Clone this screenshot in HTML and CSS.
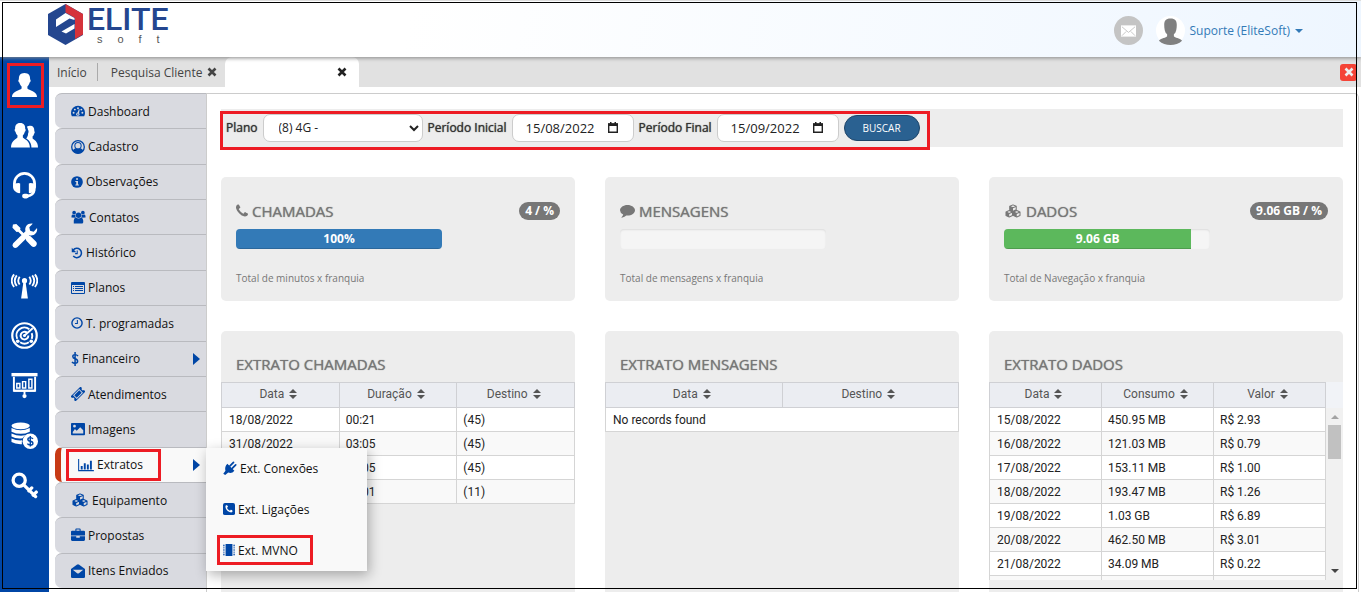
FILE: index.html
```html
<!DOCTYPE html>
<html lang="pt-BR">
<head>
<meta charset="utf-8">
<title>Elite Soft</title>
<link rel="stylesheet" href="styles.css">
</head>
<body>
<svg class="sprite" aria-hidden="true">
  <symbol id="i-x" viewBox="0 0 10 10"><path d="M1.5 1.5l7 7M8.5 1.5l-7 7" stroke="currentColor" stroke-width="2.6"/></symbol>
  <symbol id="i-gauge" viewBox="0 0 16 16"><path d="M8 2a8 8 0 0 0-8 8q0 2 1 4h14q1-2 1-4a8 8 0 0 0-8-8z"/><g fill="#d9dae0"><circle cx="3" cy="10" r="1.1"/><circle cx="4.4" cy="6.4" r="1.1"/><circle cx="8" cy="4.8" r="1.1"/><circle cx="13" cy="10" r="1.1"/><circle cx="11.8" cy="6.4" r="1.1"/><circle cx="7.8" cy="11.6" r="1.9"/><path d="M7 11L9 6l1 .4-1 5z"/></g><circle cx="7.8" cy="11.6" r=".8"/></symbol>
  <symbol id="i-user" viewBox="0 0 16 16"><circle cx="8" cy="8" r="7.200" fill="none" stroke="currentColor" stroke-width="1.500"/><path d="M2 12.500q.7-2.500 3-3.200 3 2 6 0 2.300.7 3 3.200Q11.500 15.500 8 15.500t-6-3z"/><circle cx="8" cy="6.500" r="3.600" fill="none" stroke="currentColor" stroke-width="1.200"/></symbol>
  <symbol id="i-info" viewBox="0 0 16 16"><circle cx="8" cy="8" r="7.800"/><path fill="#d9dae0" d="M6.800 3h2.500v2H6.800zM5.800 6.500h3.500v4.700h1.200v1.600H5.800v-1.600H7V8H5.800z"/></symbol>
  <symbol id="i-users" viewBox="0 0 16 16"><circle cx="3" cy="3" r="2.100"/><circle cx="13" cy="3" r="2.100"/><path d="M0 8.500V7q0-2 1.500-2 1.500 1 3 .5Q4 7 5 8.800zM16 8.500V7q0-2-1.500-2-1.500 1-3 .5.5 1.500-.5 3.300z"/><circle cx="8" cy="6" r="3.100"/><path d="M2.600 15.500V12Q2.800 9 5 8.600q3 2 6 0 2.200.4 2.400 3.400v2q0 1.500-1.500 1.500z"/></symbol>
  <symbol id="i-history" viewBox="0 0 16 16"><path d="M3 4a6.200 6.200 0 1 1 0 8" fill="none" stroke="currentColor" stroke-width="2"/><path d="M1 1v6h6z"/><path d="M8.300 4.500v4.300H5.500" fill="none" stroke="currentColor" stroke-width="1.400"/></symbol>
  <symbol id="i-list" viewBox="0 0 14 14"><path fill-rule="evenodd" d="M1 1h12q1 0 1 1v10q0 1-1 1H1q-1 0-1-1V2q0-1 1-1zM1 4v8h12V4z"/><path d="M2 5h1v1H2zm2 0h8v1H4zM2 7h1v1H2zm2 0h8v1H4zM2 9h1v1H2zm2 0h8v1H4z"/></symbol>
  <symbol id="i-clock" viewBox="0 0 16 16"><circle cx="8" cy="8" r="6.800" fill="none" stroke="currentColor" stroke-width="1.900"/><path d="M8.500 4v4.700H5.300" fill="none" stroke="currentColor" stroke-width="1.400"/></symbol>
  <symbol id="i-dollar" viewBox="0 0 9 16"><path d="M8 4.500Q6.500 3 4.700 3 2 3 2 5t2.700 2.700Q7.500 8.500 7.500 10.700 7.500 13 4.500 13 2.500 13 1 11.500M4.600 0v16" fill="none" stroke="currentColor" stroke-width="1.700"/></symbol>
  <symbol id="i-ticket" viewBox="0 0 16 16"><g transform="rotate(-45 8 8)"><path fill-rule="evenodd" d="M0 4h16v2.500a1.500 1.500 0 0 0 0 3V12H0V9.500a1.500 1.500 0 0 0 0-3zM3 5v6h10V5z"/><path d="M4 6h8v4H4z"/></g></symbol>
  <symbol id="i-image" viewBox="0 0 16 16"><path fill-rule="evenodd" d="M1 1h14q1 0 1 1v12q0 1-1 1H1q-1 0-1-1V2q0-1 1-1zM2 11.500V13h12V9.500L10.500 6l-4 4-2-2zM4 3.200a1.600 1.600 0 1 0 0 3.200 1.600 1.600 0 0 0 0-3.200z"/></symbol>
  <symbol id="i-chart" viewBox="0 0 18 16"><path d="M0 1h1.200v12.800H18V15H0zM3 9h2.200v4H3zm3.500-3h2.200v7H6.500zM10 7.500h2.200V13H10zM13.500 3h2.200v10h-2.200z"/></symbol>
  <symbol id="i-cubes" viewBox="0 0 18 16"><g fill="none" stroke="currentColor" stroke-width="1.200" stroke-linejoin="round"><path d="M9 1l3.700 1.600v4L9 8.300 5.300 6.600v-4zM5.300 2.700L9 4.300l3.700-1.600M4.700 7.500l3.700 1.600v4l-3.700 1.700L1 13.100v-4zM1 9.200l3.700 1.600 3.700-1.600M13.300 7.500L17 9.100v4l-3.700 1.700-3.700-1.700v-4zM9.600 9.200l3.700 1.600L17 9.200"/></g><path d="M5.300 2.700L9 4.300v4L5.300 6.700zM1 9.200l3.700 1.600v4L1 13.200zM9.600 9.200l3.700 1.600v4l-3.700-1.600z"/></symbol>
  <symbol id="i-case" viewBox="0 0 16 16"><path fill-rule="evenodd" d="M5 3V1.500Q5 .5 6 .5h4q1 0 1 1V3h3.700Q16 3 16 4.300V8.500H0V4.300Q0 3 1.300 3zm1.200-1.300V3h3.600V1.700zM0 9.500h6V11h4V9.500h6v4q0 1.300-1.300 1.300H1.300Q0 14.800 0 13.500z"/></symbol>
  <symbol id="i-mail" viewBox="0 0 16 16"><path d="M0 5.800L6.700.8q1.300-.9 2.600 0L16 5.800v8.700q0 1.500-1.500 1.500h-13Q0 16 0 14.500z"/><path d="M2 6.500h12l-5 4q-1 .8-2 0z" fill="#d9dae0"/></symbol>
  <symbol id="i-plug" viewBox="0 0 16 16"><path d="M5 3l8 8q-3 4-7 2.200L2.500 16 .3 14.500l2.500-3.400Q1.500 6.500 5 3z"/><path d="M8 5.500L12 1.500M10.500 8.500l4-4" stroke="currentColor" stroke-width="2" stroke-linecap="round"/></symbol>
  <symbol id="i-phonesq" viewBox="0 0 16 16"><rect x="0" y="0" width="16" height="16" rx="2.500"/><use href="#i-phone" x="3" y="3" width="10" height="10" color="#fff" fill="#fff"/></symbol>
  <symbol id="i-phone" viewBox="192 256 1408 1280"><path d="M1600 1240q0 27-10 70.500t-21 68.500q-21 50-122 106-94 51-186 51-27 0-53-3.500t-57.500-12.500-47-14.500-55.500-20.500-49-18q-98-35-175-83-127-79-264-216t-216-264q-48-77-83-175-3-9-18-49t-20.500-55.500-14.500-47-12.500-57.500-3.500-53q0-92 51-186 56-101 106-122 25-11 68.500-21t70.500-10q14 0 21 3 18 6 53 76 11 19 30 54t35 63.500 31 53.500q3 4 17.500 25t21.500 35.500 7 28.500q0 20-28.500 50t-62 55-62 53-28.500 46q0 9 5 22.500t8.500 20.500 14 24 11.500 19q76 137 174 235t235 174q2 1 19 11.500t24 14 20.500 8.500 22.500 5q18 0 46-28.500t53-62 55-62 50-28.500q14 0 28.500 7t35.500 21.500 25 17.500q25 15 53.500 31t63.500 35 54 30q70 35 76 53 3 7 3 21z"/></symbol>
  <symbol id="i-chip" viewBox="0 0 14 16"><path d="M3 1h8v14H3zM0 2h2v1H0zm0 2.200h2v1H0zm0 2.200h2v1H0zm0 2.200h2v1H0zm0 2.200h2v1H0zM0 13h2v1H0zM12 2h2v1h-2zm0 2.200h2v1h-2zm0 2.200h2v1h-2zm0 2.200h2v1h-2zm0 2.200h2v1h-2zm0 2.200h2v1h-2z"/></symbol>
  <symbol id="i-comment" viewBox="0 0 16 14"><path d="M8 .5c4.400 0 8 2.600 8 5.700s-3.600 5.700-8 5.700l-1.300-.1Q4.900 13.400 2.600 14q-1 .2-1-.1-.1-.2.500-.8Q3 12.200 3.400 10.700 0 9 0 6.200C0 3.100 3.600.5 8 .5z"/></symbol>
  <symbol id="i-sort" viewBox="0 0 8 10"><path d="M0 4l4-4 4 4zM0 6h8l-4 4z"/></symbol>

  <symbol id="n-user" viewBox="0 0 28 28"><path d="M14 1c4.500 0 6 3 5.800 6.500 1 .8.600 3-.5 3.500-.4 2-1.300 3.200-2.300 4v2c1.500 2 10 2.500 10 9H1c0-6.500 8.500-7 10-9v-2c-1-.8-1.900-2-2.300-4-1.100-.5-1.500-2.700-.5-3.500C8 4 9.500 1 14 1z"/></symbol>
  <symbol id="n-users" viewBox="0 0 28 28"><path d="M9.500 1c4 0 5.400 2.600 5.200 6 .9.700.6 2.700-.4 3.200-.4 1.800-1.200 3-2 3.600v2.200c1.200 1.700 7 2.500 7.300 10.500H0c0-7.500 5.700-8.800 6.700-10.500v-2.200c-.8-.6-1.600-1.800-2-3.600-1-.5-1.300-2.500-.4-3.200C4.100 3.600 5.500 1 9.500 1z"/><path d="M16.500 5c1-.8 2.500-1 3.500-1 3 0 4.300 2 4.200 5.500.7.600.5 2.200-.3 2.600-.3 1.400-.8 2.300-1.500 2.800v2.200c1.200 1.400 5.600 2.500 5.600 9.400h-6.800c-.2-5.500-3-7.700-5.500-9.300.8-1 2.100-2.500 2-5.200.8-1.500.6-3-.1-4 0-1-.6-2-1.100-3z"/></symbol>
  <symbol id="n-head" viewBox="0 0 28 28"><path d="M3.500 15V12a10.500 10.500 0 0 1 21 0v3M24.300 18c-.6 4-3 6.500-7.300 7" fill="none" stroke="#fff" stroke-width="2.800"/><path d="M4 12q5-1 5.500 0v9.500Q9 22.500 6 21.300 2 19 2 15zM24 12q-5-1-5.500 0v9.500q.5 1 3.500-.2 4-2.300 4-6.300z"/><rect x="11.500" y="22.500" width="7" height="5" rx="2.500"/></symbol>
  <symbol id="n-tools" viewBox="0 0 28 28"><path d="M2 2.500L5.500 2l4.300 4.300-.3 1.700 4.500 4.500-2 2-4.500-4.500-1.700.3L1.500 6z"/><path d="M15.500 16.500l2-2q2-.6 3.300.7l5 5q2 2.300 0 4.600-2.300 2-4.600 0l-5-5q-1.300-1.300-.7-3.300z"/><path d="M2.300 22L15 9.500C14 5 17 1 22.500 1.700L19 5.500l.8 3.700 3.700.8L27 6.300c1 5-3.500 8.700-7.800 7.500L6.500 26.200q-2.300 1.500-4.200-.2-1.700-2 0-4z"/></symbol>
  <symbol id="n-antenna" viewBox="0 0 28 28"><circle cx="14" cy="9" r="2.700"/><path d="M12.800 11h2.400l2.300 16.500h-7z"/><path d="M9 5q-3 4 0 8M6 3.500q-4.200 5.500 0 11M3.200 2.500q-5 6.500 0 13M19 5q3 4 0 8M22 3.500q4.200 5.500 0 11M24.800 2.500q5 6.500 0 13" fill="none" stroke="#fff" stroke-width="1.900"/></symbol>
  <symbol id="n-radar" viewBox="0 0 28 28"><g fill="none" stroke="#fff"><circle cx="14" cy="14" r="12.700" stroke-width="2.300"/><path d="M19 7.500A8.200 8.200 0 0 0 6.500 17.500M9.500 21a8.200 8.200 0 0 0 9 0M21.500 17.500a8.200 8.200 0 0 0 0-6" stroke-width="2"/><path d="M16.500 11A4 4 0 1 0 18 14M14 14l8.500-7.500" stroke-width="2"/></g><circle cx="14" cy="14" r="1.600"/><circle cx="7" cy="20" r="1.900"/><circle cx="21" cy="20" r="1.900"/></symbol>
  <symbol id="n-board" viewBox="0 0 28 28"><path d="M.5 1h27v3.500h-27z"/><path d="M3 5v14.500h22V5" fill="none" stroke="#fff" stroke-width="2"/><path d="M3 18.500h22v2H3zM13 20h2v3h-2z"/><circle cx="14" cy="25" r="2.200"/><path d="M6 12h3.200v4.500H6zM12 10h3.200v6.500H12zM18.500 7.500h3.200v9h-3.200z" fill="none" stroke="#fff" stroke-width="1.500"/></symbol>
  <symbol id="n-coins" viewBox="0 0 28 28"><ellipse cx="10" cy="4" rx="9.500" ry="3.500"/><path d="M.5 6.200q9.500 4.500 19 0V10q-9.500 4.500-19 0zM.5 11.800q9.500 4.500 18 .6-5 1.600-6.500 4.500-7 .8-11.500-1.800zM.5 17q5 2.500 11 2-.5 2-.2 4-7 .3-10.800-2.200z"/><circle cx="20" cy="20" r="8"/><path d="M22.800 17.500q-1-1.300-2.800-1.300-2.500 0-2.500 1.800t2.500 2 2.700 2-2.700 1.900q-2 0-3-1.400M20 14.500v11" fill="none" stroke="#0046a6" stroke-width="1.500"/></symbol>
  <symbol id="n-key" viewBox="0 0 28 28"><circle cx="8.500" cy="8.500" r="6.300" fill="none" stroke="#fff" stroke-width="3.400"/><path d="M13 13l12.500 12.500M18.500 19.500l3-3M23 24l3.200-3.200" fill="none" stroke="#fff" stroke-width="3.400" stroke-linecap="round"/></symbol>
</svg>

<div class="app">
  <header class="top">
    <a class="logo" href="#">
      <svg class="logo-mark" viewBox="0 0 36 42" aria-hidden="true"><path d="M17.500 0L35 10v21L17.500 41 0 31V10z" fill="#24468f"/><path d="M17.500 0L35 10v20.500L27 35V14l-9.500-5.500z" fill="#d5333b"/><path d="M8 15.500l9.500-6.500 9 5v2l-5-1.500L8 23z" fill="#fff"/><path d="M13.500 27.500L26.500 20v4.500l-8.500 5z" fill="#fff"/></svg>
      <span class="logo-text"><span class="logo-name">ELITE</span><span class="logo-sub"><span>s</span><span>o</span><span>f</span><span>t</span></span></span>
    </a>
    <div class="account">
      <button class="mail" aria-label="Mensagens"><svg viewBox="0 0 16 12"><path d="M0 0h16v12H0z" fill="#fff"/><path d="M1 1.500l7 6 7-6M1 11l4.500-4.500M15 11l-4.500-4.500" fill="none" stroke="#c4c4c4" stroke-width="1"/></svg></button>
      <svg class="avatar" viewBox="0 0 30 30" aria-hidden="true"><circle cx="15" cy="15" r="15" fill="#fff"/><path d="M15 2.500c5 0 6.500 2.500 6.500 6.500 0 4-.5 8-3 10v2c1 1.500 6 2 8.500 4.500q-5 4.500-12 4.500T3 25.500C5.500 23 10.500 22.500 11.500 21v-2c-2.500-2-3-6-3-10 0-4 1.500-6.500 6.500-6.500z" fill="#808080"/></svg>
      <a class="account-name" href="#">Suporte (EliteSoft) <span class="caret"></span></a>
    </div>
  </header>

  <div class="body">
    <nav class="rail" aria-label="Módulos">
      <button class="marked" aria-label="Clientes"><svg><use href="#n-user"/></svg></button>
      <button aria-label="Usuários"><svg><use href="#n-users"/></svg></button>
      <button aria-label="Suporte"><svg><use href="#n-head"/></svg></button>
      <button aria-label="Ferramentas"><svg><use href="#n-tools"/></svg></button>
      <button aria-label="Rede"><svg><use href="#n-antenna"/></svg></button>
      <button aria-label="Monitoramento"><svg><use href="#n-radar"/></svg></button>
      <button aria-label="Relatórios"><svg><use href="#n-board"/></svg></button>
      <button aria-label="Financeiro"><svg><use href="#n-coins"/></svg></button>
      <button aria-label="Acessos"><svg><use href="#n-key"/></svg></button>
    </nav>

    <div class="work">
      <div class="tabs">
        <a class="tab first" href="#">Início</a>
        <a class="tab" href="#">Pesquisa Cliente <svg><use href="#i-x"/></svg></a>
        <a class="tab active" href="#" aria-label="Aba atual"><svg><use href="#i-x"/></svg></a>
        <button class="close-all" aria-label="Fechar"><svg><use href="#i-x"/></svg></button>
      </div>

      <div class="page">
        <ul class="menu">
          <li><a href="#"><svg><use href="#i-gauge"/></svg>Dashboard</a></li>
          <li><a href="#"><svg><use href="#i-user"/></svg>Cadastro</a></li>
          <li><a href="#"><svg class="s12"><use href="#i-info"/></svg>Observações</a></li>
          <li><a href="#"><svg class="s15"><use href="#i-users"/></svg>Contatos</a></li>
          <li><a href="#"><svg class="s12"><use href="#i-history"/></svg>Histórico</a></li>
          <li><a href="#"><svg><use href="#i-list"/></svg>Planos</a></li>
          <li><a href="#"><svg class="s12"><use href="#i-clock"/></svg>T. programadas</a></li>
          <li><a href="#"><svg class="s8"><use href="#i-dollar"/></svg>Financeiro<span class="arrow"></span></a></li>
          <li><a href="#"><svg><use href="#i-ticket"/></svg>Atendimentos</a></li>
          <li><a href="#"><svg><use href="#i-image"/></svg>Imagens</a></li>
          <li class="current"><a href="#"><span class="marked"><svg class="s16"><use href="#i-chart"/></svg>Extratos</span><span class="arrow"></span></a>
            <ul class="submenu">
              <li><a href="#"><svg><use href="#i-plug"/></svg>Ext. Conexões</a></li>
              <li><a href="#"><svg class="s12"><use href="#i-phonesq"/></svg>Ext. Ligações</a></li>
              <li><a href="#"><span class="marked"><svg class="s12"><use href="#i-chip"/></svg>Ext. MVNO</span></a></li>
            </ul>
          </li>
          <li><a href="#"><svg class="s18"><use href="#i-cubes"/></svg>Equipamento</a></li>
          <li><a href="#"><svg><use href="#i-case"/></svg>Propostas</a></li>
          <li><a href="#"><svg><use href="#i-mail"/></svg>Itens Enviados</a></li>
        </ul>

        <main class="panel">
          <div class="filter">
            <form class="marked">
              <label for="plano">Plano</label>
              <select id="plano"><option>(8) 4G -</option></select>
              <label for="ini">Período Inicial</label>
              <span class="date"><input id="ini" type="text" value="15/08/2022"><svg viewBox="0 0 10 11"><path d="M.7 2h8.600v8.300H.7z" fill="none" stroke="#222" stroke-width="1.400"/><path d="M0 1.500h10V4H0zM2 0h1.500v2H2zm4.500 0H8v2H6.500z" fill="#222"/></svg></span>
              <label for="fim">Período Final</label>
              <span class="date"><input id="fim" type="text" value="15/09/2022"><svg viewBox="0 0 10 11"><path d="M.7 2h8.600v8.300H.7z" fill="none" stroke="#222" stroke-width="1.400"/><path d="M0 1.500h10V4H0zM2 0h1.500v2H2zm4.500 0H8v2H6.500z" fill="#222"/></svg></span>
              <button class="search" type="button">BUSCAR</button>
            </form>
          </div>

          <div class="cards">
            <section class="card">
              <div class="card-head"><h2><svg class="s12"><use href="#i-phone"/></svg>CHAMADAS</h2><span class="badge">4 / %</span></div>
              <div class="progress"><div class="bar blue" style="width:100%">100%</div></div>
              <p>Total de minutos x franquia</p>
            </section>
            <section class="card">
              <div class="card-head"><h2><svg class="s15"><use href="#i-comment"/></svg>MENSAGENS</h2></div>
              <div class="progress"></div>
              <p>Total de mensagens x franquia</p>
            </section>
            <section class="card">
              <div class="card-head"><h2><svg class="s18"><use href="#i-cubes"/></svg>DADOS</h2><span class="badge">9.06 GB / %</span></div>
              <div class="progress"><div class="bar green" style="width:91%">9.06 GB</div></div>
              <p>Total de Navegação x franquia</p>
            </section>
          </div>

          <div class="cards reports">
            <section class="card report">
              <h2>EXTRATO CHAMADAS</h2>
              <table>
                <thead><tr><th>Data <svg><use href="#i-sort"/></svg></th><th>Duração <svg><use href="#i-sort"/></svg></th><th>Destino <svg><use href="#i-sort"/></svg></th></tr></thead>
                <tbody>
                  <tr><td>18/08/2022</td><td>00:21</td><td>(45)</td></tr>
                  <tr><td>31/08/2022</td><td>03:05</td><td>(45)</td></tr>
                  <tr><td></td><td>00:05</td><td>(45)</td></tr>
                  <tr><td></td><td>00:01</td><td>(11)</td></tr>
                </tbody>
              </table>
            </section>
            <section class="card report">
              <h2>EXTRATO MENSAGENS</h2>
              <table>
                <thead><tr><th>Data <svg><use href="#i-sort"/></svg></th><th>Destino <svg><use href="#i-sort"/></svg></th></tr></thead>
                <tbody><tr><td colspan="2">No records found</td></tr></tbody>
              </table>
            </section>
            <section class="card report">
              <h2>EXTRATO DADOS</h2>
              <div class="scroller">
                <div class="scroll-view">
                  <table>
                    <thead><tr><th>Data <svg><use href="#i-sort"/></svg></th><th>Consumo <svg><use href="#i-sort"/></svg></th><th>Valor <svg><use href="#i-sort"/></svg></th></tr></thead>
                    <tbody>
                      <tr><td>15/08/2022</td><td>450.95 MB</td><td>R$ 2.93</td></tr>
                      <tr><td>16/08/2022</td><td>121.03 MB</td><td>R$ 0.79</td></tr>
                      <tr><td>17/08/2022</td><td>153.11 MB</td><td>R$ 1.00</td></tr>
                      <tr><td>18/08/2022</td><td>193.47 MB</td><td>R$ 1.26</td></tr>
                      <tr><td>19/08/2022</td><td>1.03 GB</td><td>R$ 6.89</td></tr>
                      <tr><td>20/08/2022</td><td>462.50 MB</td><td>R$ 3.01</td></tr>
                      <tr><td>21/08/2022</td><td>34.09 MB</td><td>R$ 0.22</td></tr>
                      <tr><td></td><td></td><td></td></tr>
                    </tbody>
                  </table>
                </div>
                <div class="scroll-side" aria-hidden="true">
                  <div class="scrollbar"><span class="up"></span><span class="thumb"></span><span class="down"></span></div>
                </div>
              </div>
            </section>
          </div>
        </main>
      </div>
    </div>
  </div>
  <div class="frame" aria-hidden="true"></div>
</div>
</body>
</html>
```

FILE: styles.css
```css
* { box-sizing: border-box; }
body { margin: 0; font-family: "Open Sans", "Noto Sans", sans-serif; font-size: 13px; color: #333; background: #fff; }
a { color: inherit; text-decoration: none; }
button { border: 0; padding: 0; background: none; font: inherit; color: inherit; }
ul { list-style: none; margin: 0; padding: 0; }
h2, p { margin: 0; }
svg { fill: currentColor; flex: none; }
.sprite { position: absolute; width: 0; height: 0; }
.app { position: relative; display: flex; flex-direction: column; height: 100vh; overflow: hidden; }
.frame { position: absolute; inset: 2px 4px 3px 2px; border: 1px solid #000; pointer-events: none; z-index: 9; }
.marked { outline: 3px solid #ed1c24; outline-offset: -3px; }

.top { display: flex; justify-content: space-between; height: 57px; padding: 0 58px 0 48px; border-top: 1px solid #ddd; background: linear-gradient(100deg, #fff 30%, #eef6ff); box-shadow: 0 1px 4px #888; z-index: 2; flex: none; }
.logo { display: flex; gap: 3px; }
.logo-mark { width: 36px; height: 42px; margin-top: 3px; }
.logo-text { display: flex; flex-direction: column; color: #24468f; font-family: Roboto, sans-serif; }
.logo-name { font-size: 32px; line-height: 36px; font-weight: 500; }
.logo-sub { display: flex; justify-content: space-between; margin-top: -4px; padding: 0 9px 0 10px; font: 11px/12px "Liberation Sans", sans-serif; color: #555; }
.account { display: flex; align-items: center; gap: 13px; padding-top: 3px; color: #337ab7; }
.mail { display: flex; align-items: center; justify-content: center; width: 29px; height: 29px; border-radius: 50%; background: #c4c4c4; }
.mail svg { width: 15px; height: 12px; }
.avatar { width: 29px; height: 29px; }
.account-name { display: flex; align-items: center; gap: 5px; margin-left: -8px; font-size: 12px; }
.caret { border: 4px solid transparent; border-top-color: currentColor; border-bottom: 0; }

.body { display: flex; flex: 1; min-height: 0; }
.rail { display: flex; flex-direction: column; align-items: flex-start; gap: 5px; width: 49px; padding: 6px 0 0 7px; background: #0046a6; color: #fff; flex: none; }
.rail button { display: flex; align-items: center; justify-content: center; width: 37px; height: 45px; padding-right: 2px; }
.rail svg { width: 27px; height: 27px; }

.work { display: flex; flex-direction: column; flex: 1; min-width: 0; }
.tabs { display: flex; height: 30px; background: #e1e1e1; color: #444; font-size: 12px; flex: none; }
.tab { display: flex; align-items: center; gap: 5px; padding: 0 8px 0 13px; }
.tab.first { padding: 0 10px 0 8px; margin: 6px 0; border-right: 1px solid #aaa; }
.tab svg { width: 10px; height: 10px; }
.tab.active { width: 134px; justify-content: flex-end; padding-right: 12px; border-radius: 7px 7px 0 0; background: #fff; color: #222; }
.close-all { display: flex; align-items: center; justify-content: center; align-self: center; width: 17px; height: 17px; margin-left: auto; margin-right: 4px; border-radius: 3px; background: #f44336; color: #eee; }
.close-all svg { width: 10px; height: 10px; }

.page { display: flex; flex: 1; min-height: 0; padding: 6px 2px 0 6px; }
.menu { display: flex; flex-direction: column; width: 151px; padding-bottom: 4px; color: #111; flex: none; }
.menu > li { position: relative; flex: 1; border-top: 1px solid #b9babf; border-radius: 7px 0 0 7px; background: #d9dae0; }
.menu a { display: flex; align-items: center; height: 100%; padding: 0 6px 0 16px; font-size: 12px; }
.menu svg { width: 14px; height: 14px; margin-right: 3px; color: #0046a6; }
.menu .s8 { width: 8px; }
.s12, .menu .s12 { width: 12px; }
.s15, .menu .s15 { width: 15px; }
.menu .s16 { width: 16px; }
.s18, .menu .s18 { width: 18px; }
.arrow { margin-left: auto; border: 6px solid transparent; border-left: 7px solid #0046a6; border-right: 0; }
.menu > .current { background: #f9f9f9; border-left: 6px solid #c73a15; z-index: 3; }
.current > a { padding: 0 6px 0 5px; }
.current > a .marked { display: flex; align-items: center; height: 32px; padding: 0 18px 0 12px; }
.submenu { position: absolute; left: 100%; top: 0; width: 161px; background: #f9f9f9; box-shadow: 2px 4px 12px rgba(0, 0, 0, .3); }
.submenu li { display: flex; align-items: center; height: 41px; }
.submenu a { padding: 0 17px; height: auto; }
.submenu a:has(.marked) { padding: 0 11px; }
.submenu .marked { display: flex; align-items: center; height: 30px; padding: 0 15px 0 6px; }

.panel { display: flex; flex-direction: column; gap: 30px; flex: 1; min-width: 0; padding: 15px 15px 0 14px; border: 1px solid #ccc; border-width: 1px 1px 0; border-radius: 0 5px 0 0; }
.filter { display: flex; height: 38px; background: #ededed; flex: none; }
.filter form { display: flex; align-items: center; gap: 5px; height: 39px; margin: 2px 0 0 -1px; padding: 0 10px 6px 6px; }
.filter label { font-size: 12px; text-shadow: 0 0 1px #333; }
.filter select, .date { height: 28px; border: 1px solid #ccc; border-radius: 7px; background: #fff; color: #222; }
.filter select { width: 160px; padding-left: 11px; font: 12px "Open Sans", sans-serif; }
.date { display: flex; align-items: center; width: 122px; padding: 0 15px 0 13px; }
.date input { flex: 1; min-width: 0; border: 0; padding: 0; background: none; font: 13px "Open Sans", sans-serif; color: #222; }
.date svg { width: 10px; height: 11px; }
.search { width: 76px; height: 26px; border: 1px solid #1d4468; border-radius: 13px; background: #2a6191; color: #fff; font-size: 10px; }

.cards { display: grid; grid-template-columns: repeat(3, 1fr); gap: 30px; }
.card { padding: 24px 15px 15px; border-radius: 5px; background: #ededed; color: #777; }
.card-head { display: flex; justify-content: space-between; align-items: center; height: 20px; margin-bottom: 8px; }
h2 { display: flex; align-items: center; gap: 4px; font-size: 15px; line-height: 18px; font-weight: 400; color: #777; text-shadow: 0 0 1px #777; }
h2 svg { height: 14px; }
.badge { padding: 3px 6px; border-radius: 10px; background: #777; color: #fff; font-size: 12px; line-height: 12px; font-weight: 700; }
.progress { width: 206px; height: 20px; border-radius: 4px; overflow: hidden; background: #f5f5f5; box-shadow: inset 0 1px 2px rgba(0, 0, 0, .1); }
.bar { height: 20px; color: #fff; font-size: 12px; line-height: 20px; font-weight: 700; text-align: center; box-shadow: inset 0 -1px 0 rgba(0, 0, 0, .15); }
.blue { background: #337ab7; }
.green { background: #5cb85c; }
.card p { margin-top: 22px; font-size: 10px; line-height: 15px; }

.reports { flex: 1; min-height: 0; }
.report { padding: 0; border-radius: 5px 5px 0 0; }
.report h2 { padding: 24px 15px 9px; }
table { width: 100%; border-collapse: collapse; table-layout: fixed; font: 12px Roboto, sans-serif; color: #222; }
th { height: 25px; padding: 0 4px 2px 0; border: 1px solid #cfd0d4; background: #ebedf2; font-weight: 400; color: #555; }
th svg { width: 8px; height: 10px; margin-left: 2px; vertical-align: -1px; }
td { height: 24px; padding: 0 6px; border: 1px solid #d5d5d5; background: #fff; }
td:first-child { padding-left: 7px; }
tr:nth-child(even) td { background: #f9f9f9; }
.scroller { display: flex; height: 198px; }
.scroll-view { flex: 1; min-width: 0; overflow: hidden; }
.scroll-side { width: 17px; padding-top: 26px; background: #f1f3f7; }
.scrollbar { display: flex; flex-direction: column; align-items: center; gap: 6px; height: 100%; padding: 7px 2px; background: #f1f1f1; }
.up, .down { border: 4px solid transparent; }
.up { border-top: 0; border-bottom-color: #a3a3a3; }
.down { border-bottom: 0; border-top-color: #444; margin-top: auto; }
.thumb { width: 13px; height: 34px; background: #c1c1c1; }
```
